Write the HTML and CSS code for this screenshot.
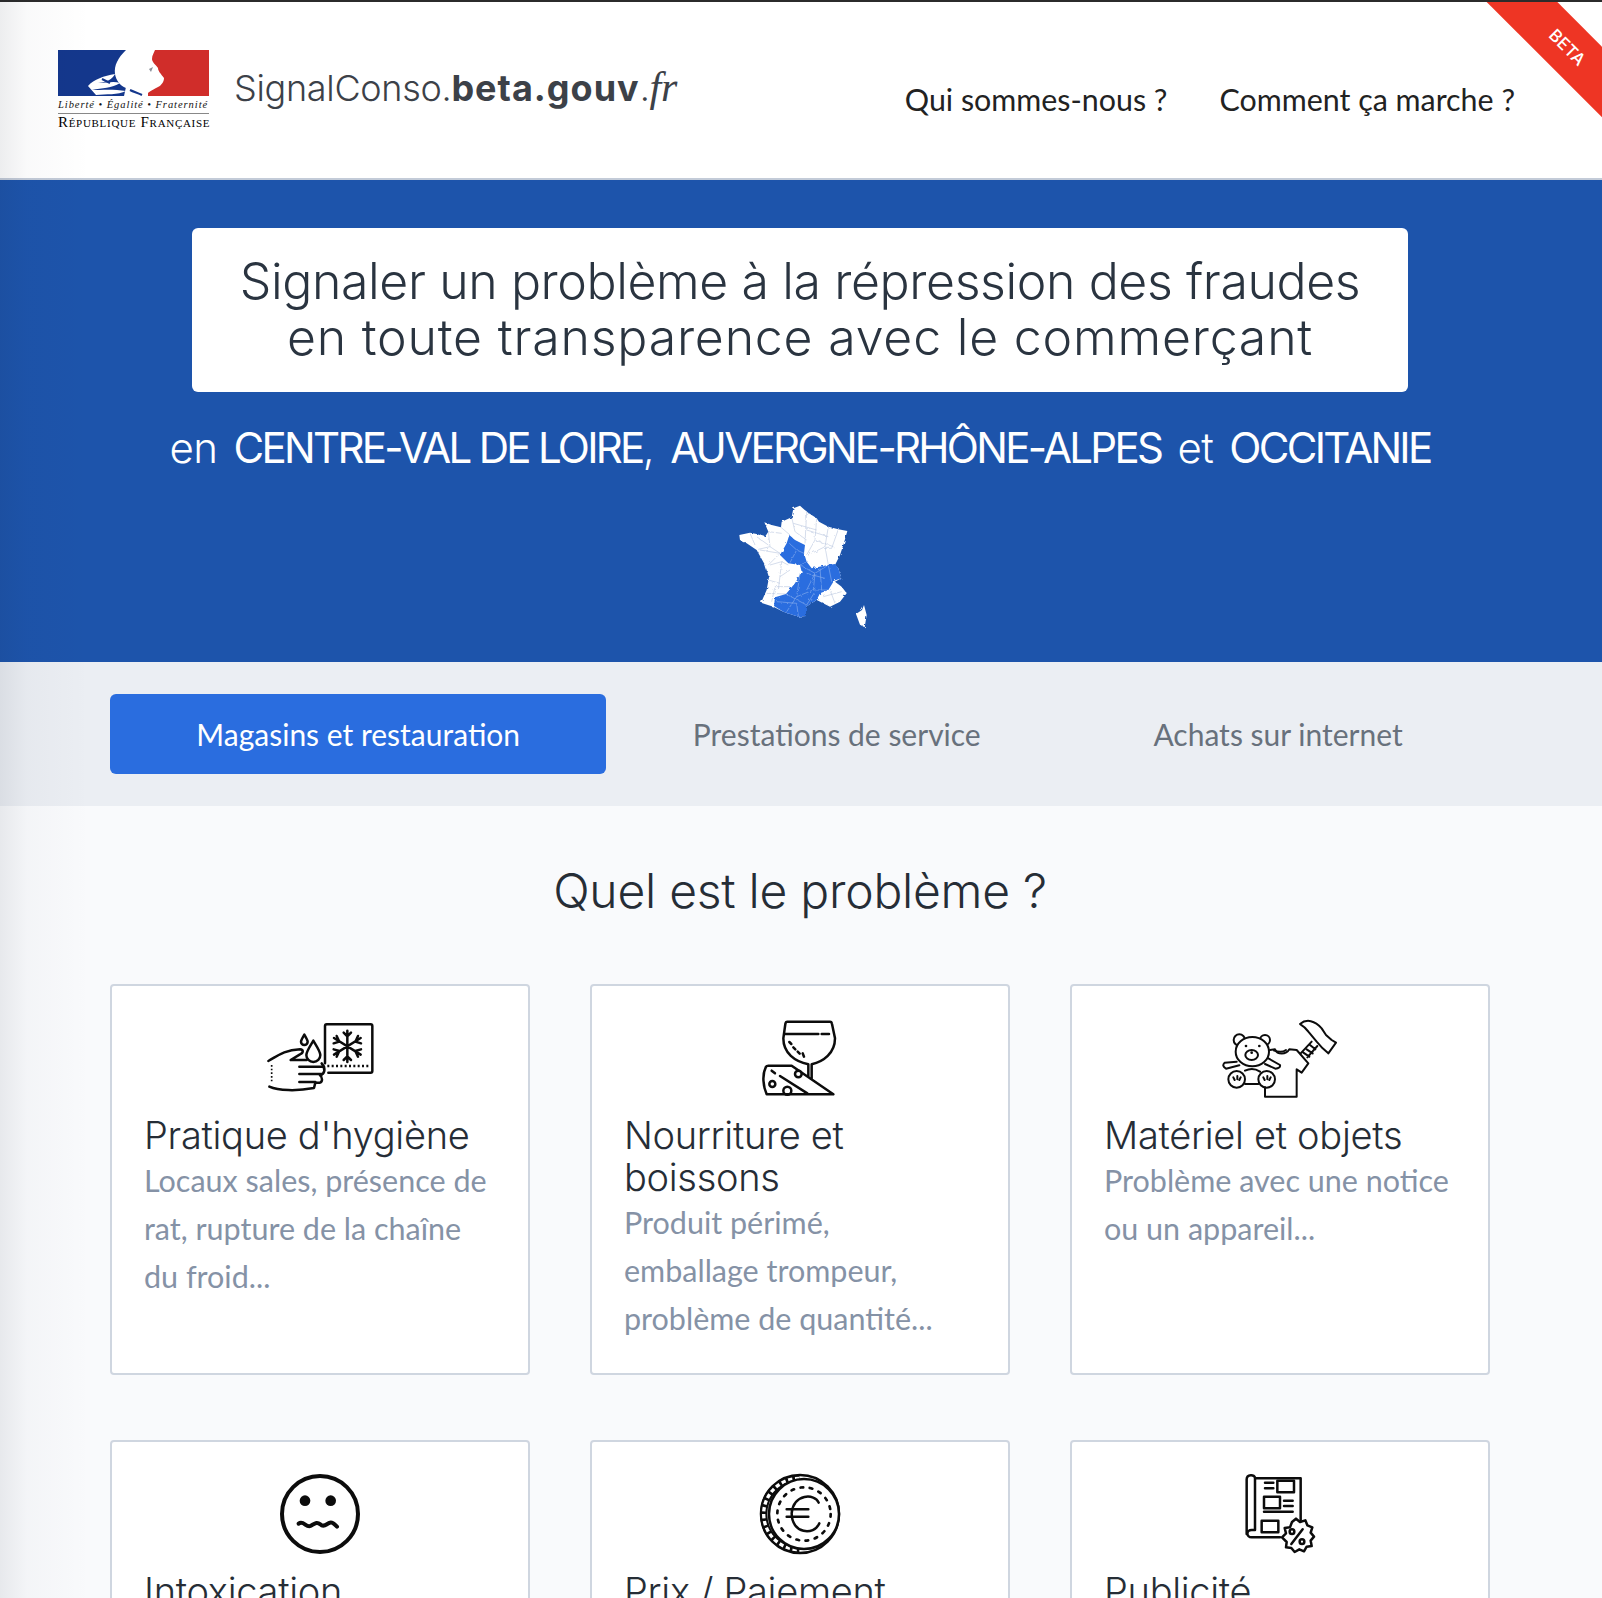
FILE: index.html
```html
<!DOCTYPE html>
<html lang="fr">
<head>
<meta charset="utf-8">
<title>SignalConso</title>
<link rel="stylesheet" href="styles.css">
</head>
<body>
<div class="page">
  <header class="site-header">
    <div class="brand">
      <div class="logo">
        <svg class="flag" viewBox="0 0 151 46" width="151" height="46">
          <rect width="151" height="46" fill="#fff"/>
          <path d="M0 0H68C60 8 56 15 57 24C58 30 62 36 68 38V46H0Z" fill="#14378c"/>
          <path d="M97 0H151V46H87C90 42 93 41 100 37C104 35 106 31 106 28C103 24 100 21 100 18C97 14 94 12 94 9C94 5 96 3 97 0Z" fill="#d02d2a"/>
          <path d="M66 46H90V42L80 37L68 37Z" fill="#fff"/>
          <path d="M30 36C36 29 46 26 57 24C54 30 48 32 40 33C48 33 56 31 62 33C54 38 44 38 34 40C44 40 56 39 68 41C60 45 48 44 38 45" fill="#fff"/>
          <path d="M44 29L52 33M72 40C76 42 80 43 84 45" stroke="#14378c" stroke-width="2" fill="none"/>
          <path d="M91 19L95 17L93 22Z" fill="#8a8f99"/>
        </svg>
        <div class="motto">Liberté • Égalité • Fraternité</div>
        <div class="republic">République Française</div>
      </div>
      <div class="site-name">SignalConso.<b>beta.gouv</b>.<i>fr</i></div>
    </div>
    <nav class="main-nav">
      <a>Qui sommes-nous ?</a>
      <a>Comment ça marche ?</a>
    </nav>
    <div class="ribbon"><span>BETA</span></div>
  </header>

  <section class="hero">
    <h1 class="hero-title">Signaler un problème à la répression des fraudes<br><span class="hero-line-2">en toute transparence avec le commerçant</span></h1>
    <p class="hero-sub">en <b>CENTRE-VAL DE LOIRE</b>, <b>AUVERGNE-RHÔNE-ALPES</b> et <b>OCCITANIE</b></p>
    <svg class="map" viewBox="0 0 600 450" width="200" height="150">
      <defs>
        <filter id="rough" x="-5%" y="-5%" width="110%" height="110%">
          <feTurbulence type="fractalNoise" baseFrequency="0.09" numOctaves="2" seed="4" result="n"/>
          <feDisplacementMap in="SourceGraphic" in2="n" scale="9"/>
        </filter>
      </defs>
      <g filter="url(#rough)">
        <path fill="#fff" d="M118 135L150 128L170 132L195 140L205 125L193 97L215 105L243 112L245 95L275 82L280 55L300 47L320 65L350 85L357 95L385 110L415 118L442 123L430 165L420 195L405 225L415 235L424 265L405 275L425 290L440 310L420 335L390 350L350 330L318 350L318 378L295 380L250 365L220 350L183 338L200 300L207 262L195 225L170 180L140 160L120 150Z"/>
        <path fill="#fff" d="M492 345L500 375L494 412L480 404L468 372L486 360Z"/>
        <g class="dept">
          <path d="M150 130L165 165M205 125L210 170L240 190M210 170L175 178M243 112L270 135M275 82L285 125L320 150M320 65L315 160M350 85L345 150L320 195M385 110L375 170L335 190M415 118L395 175L375 175M375 170L385 225M210 225L245 215L265 225M245 215L235 300M205 270L240 280M270 290L225 290M200 310L258 312M345 150L400 170M390 300L405 340M370 320L425 305M280 100L350 120M320 120L385 140M170 140L205 165M245 130L205 125M180 180L240 190M205 225L240 190M270 240L240 260M225 290L215 335"/>
        </g>
        <path fill="#2a6ddf" d="M268 135L285 150L315 165L312 190L320 215L300 225L265 220L240 195L260 160Z"/>
        <path fill="#2a6ddf" d="M320 215L335 235L385 225L405 222L415 235L424 265L402 272L385 300L360 310L350 330L318 350L318 378L295 380L250 365L222 348L225 322L258 312L285 280L305 245L300 225Z"/>
        <g class="dept-blue">
          <path d="M268 160L290 180L270 218M290 180L312 190M300 225L345 250L340 300M345 250L385 225M385 225L395 275M340 300L385 300M300 250L290 320L260 365M258 312L320 345M290 320L340 300M230 335L290 340L295 380M345 250L320 300M320 250L375 265M360 235L365 300M320 345L345 305"/>
        </g>
      </g>
    </svg>
  </section>

  <div class="tabs">
    <a class="tab tab-active">Magasins et restauration</a>
    <a class="tab">Prestations de service</a>
    <a class="tab">Achats sur internet</a>
  </div>

  <main class="content">
    <h2 class="section-title">Quel est le problème ?</h2>
    <div class="card-grid">
      <article class="card">
        <svg class="card-icon" viewBox="60 36 360 270" width="120" height="90">
          <path d="M255 190V78Q255 73 260 73H392Q397 73 397 78V213Q397 218 392 218H265"/>
          <path class="dots" d="M262 198H390"/>
          <path d="M322 92V186M282 114L362 164M362 114L282 164M311 98L322 109L333 98M311 180L322 169L333 180M281 130L298 125L290 108M363 130L346 125L354 108M281 148L298 153L290 170M363 148L346 153L354 170"/>
          <path d="M193 104C185 118 183 122 183 125A10 10 0 0 0 203 125C203 122 201 118 193 104Z"/>
          <path d="M220 122C206 145 199 155 199 165A21 21 0 0 0 241 165C241 155 234 145 220 122Z"/>
          <path d="M85 183C110 170 130 150 180 148C192 148 190 160 180 163L152 180H200M88 260C115 272 170 274 222 264L226 248H240C248 245 248 232 240 226C255 222 258 205 245 190"/>
          <path d="M178 200H252M178 222H246M178 246H226"/>
          <path class="dots-v" d="M95 195V250"/>
        </svg>
        <h3 class="card-title">Pratique d'hygiène</h3>
        <p class="card-text">Locaux sales, présence de rat, rupture de la chaîne du froid...</p>
      </article>
      <article class="card">
        <svg class="card-icon" viewBox="30 36 360 270" width="120" height="90">
          <path d="M172 65H300Q305 65 306 72L315 115C315 160 280 185 245 193V235M172 65Q167 65 166 72L160 115C160 160 195 185 235 193V228"/>
          <path d="M165 102H265M275 102H297M178 126L184 132M190 142L196 148M203 155L209 161M218 160L222 170"/>
          <path d="M108 200Q110 197 115 197H185L310 283H110C100 260 95 225 108 200Z"/>
          <circle cx="127" cy="252" r="9"/><circle cx="172" cy="272" r="12"/><circle cx="205" cy="222" r="10" fill="#fff"/>
          <path d="M125 212L135 220M150 228L232 280"/>
        </svg>
        <h3 class="card-title">Nourriture et boissons</h3>
        <p class="card-text">Produit périmé, emballage trompeur, problème de quantité...</p>
      </article>
      <article class="card">
        <svg class="card-icon fine" viewBox="60 36 360 270" width="120" height="90">
          <circle cx="118" cy="120" r="17"/><circle cx="195" cy="120" r="15"/>
          <ellipse cx="157" cy="155" rx="50" ry="44" fill="#fff"/>
          <ellipse cx="155" cy="165" rx="19" ry="15"/>
          <circle class="solid" cx="138" cy="138" r="4"/><circle class="solid" cx="178" cy="138" r="4"/><circle class="solid" cx="155" cy="158" r="4"/>
          <path d="M110 185L74 188Q64 198 78 206L118 196M205 175L240 195Q242 205 226 206L195 192"/>
          <circle cx="110" cy="238" r="25" fill="#fff"/><circle cx="200" cy="238" r="25" fill="#fff"/>
          <path d="M135 252H175M135 212C150 205 165 205 180 215M100 232L104 240M112 228V238M122 232L118 240M190 232L194 240M202 228V238M212 232L208 240"/>
          <path d="M210 150L225 148C232 165 258 165 268 148L290 150L325 190L305 218L290 208V290H195V262"/>
          <path d="M222 152C235 156 250 156 258 150"/>
          <path d="M302 160L335 125M322 172L352 138M310 158L328 170M320 148L338 160M330 135L346 148"/>
          <path d="M300 72C320 55 345 62 365 85L378 105L395 120L408 128L385 160L368 145L350 125L325 95C315 80 305 75 300 72Z"/>
        </svg>
        <h3 class="card-title">Matériel et objets</h3>
        <p class="card-text">Problème avec une notice ou un appareil...</p>
      </article>
      <article class="card">
        <svg class="card-icon thick" viewBox="0 24 360 270" width="120" height="90">
          <circle cx="180" cy="162" r="114"/>
          <circle class="solid" cx="135" cy="122" r="16"/><circle class="solid" cx="212" cy="122" r="16"/>
          <path d="M116 191C130 180 139 204 151 198C164 191 170 184 181 193C192 204 200 191 208 189C217 184 224 193 231 200"/>
        </svg>
        <h3 class="card-title">Intoxication</h3>
      </article>
      <article class="card">
        <svg class="card-icon" viewBox="0 24 360 270" width="120" height="90">
          <circle cx="180" cy="162" r="117"/>
          <path class="rim" d="M178 55A107 107 0 0 0 178 269"/>
          <path class="rim-gap" d="M178 55A107 107 0 0 0 178 269"/>
          <circle cx="192" cy="162" r="105" fill="#fff"/>
          <circle class="dots-round" cx="192" cy="162" r="80"/>
          <path d="M236 128C225 100 160 100 155 160C155 222 222 228 238 190M140 148H205M140 170H205"/>
        </svg>
        <h3 class="card-title">Prix / Paiement</h3>
      </article>
      <article class="card">
        <svg class="card-icon" viewBox="0 24 360 270" width="120" height="90">
          <path d="M105 55H242V180M180 232H95C78 232 78 210 95 210H105V55C105 42 80 42 80 58V222"/>
          <path class="dots-v" d="M105 62V205"/>
          <rect x="172" y="62" width="50" height="35"/><rect x="132" y="110" width="48" height="35"/><rect x="125" y="182" width="50" height="35"/>
          <path d="M135 68H160M135 85H160M192 122H218M192 138H218M132 155H218"/>
          <path fill="#fff" d="M228 176L240 186L256 181L262 196L277 202L272 218L282 230L272 242L275 258L260 260L252 274L238 268L224 276L214 264L198 262L200 246L186 232L198 220L194 204L210 202L216 186Z"/>
          <circle cx="216" cy="215" r="7"/><circle cx="246" cy="245" r="7"/>
          <path d="M248 208L214 252"/>
        </svg>
        <h3 class="card-title">Publicité</h3>
      </article>
    </div>
  </main>
  <div class="edge-shade"></div>
</div>
</body>
</html>
```
FILE: styles.css
```css
html, body { margin: 0; padding: 0; }
body { font-family: "Lato", "Open Sans", sans-serif; color: #222; background: #fff; }
.page { position: relative; height: 1598px; overflow: hidden; }
.edge-shade { position: absolute; top: 0; bottom: 0; left: 0; width: 90px; pointer-events: none; background: linear-gradient(to right, rgba(20,30,50,.08), rgba(20,30,50,.025) 30%, rgba(20,30,50,0)); }

.site-header { position: relative; height: 176px; border-top: 2px solid #2b2b2b; border-bottom: 2px solid #c3cbd8; display: flex; justify-content: space-between; background: #fff; }
.brand { display: flex; align-items: flex-start; padding: 48px 0 0 58px; }
.logo { width: 151px; }
.flag { display: block; }
.motto { font: italic 10.5px/13px "Liberation Serif", serif; white-space: nowrap; border-bottom: 1px solid #888; padding: 2px 0 2px; margin-bottom: 1px; letter-spacing: .95px; color: #111; }
.republic { font: 15px/15px "Liberation Serif", serif; font-variant: small-caps; white-space: nowrap; letter-spacing: .7px; color: #000; }
.site-name { margin: 14px 0 0 25px; font: 300 36px/46px "Inter", sans-serif; color: #3c4148; letter-spacing: -.3px; white-space: nowrap; }
.site-name b { font-weight: 700; letter-spacing: 1px; }
.site-name i { font-family: "Liberation Serif", serif; font-weight: 400; font-size: 42px; }
.main-nav { display: flex; gap: 52px; padding: 76px 87px 0 0; font-size: 30.4px; line-height: 42px; color: #222; }
.main-nav a { white-space: nowrap; }

.ribbon { position: absolute; top: 0; right: 0; width: 116px; height: 116px; overflow: hidden; }
.ribbon span { position: absolute; left: -24px; top: 15px; width: 200px; height: 50px; box-sizing: border-box; padding-left: 15px; background: #ee3524; color: #fff; transform: rotate(45deg); font: 500 17px/50px "Inter", sans-serif; text-align: center; }

.hero { background: #1d54ab; height: 482px; display: flex; flex-direction: column; align-items: center; padding: 48px 2px 0 0; box-sizing: border-box; }
.hero-title { margin: 0; width: 1216px; height: 164px; box-sizing: border-box; padding: 25px 0 0; background: #fff; border-radius: 6px; font: 300 50px/56px "Inter", sans-serif; color: #2a3440; text-align: center; letter-spacing: -.4px; }
.hero-line-2 { letter-spacing: .8px; }
.hero-sub { margin: 31px 0 0; font: 300 42px/50px "Inter", sans-serif; color: #fff; white-space: nowrap; letter-spacing: -.6px; word-spacing: 5px; }
.hero-sub b { font-weight: 400; letter-spacing: -2.7px; word-spacing: 0; }
.map { display: block; margin-top: 17px; }
.map path { stroke: none; }
.dept path { fill: none; stroke: #b9c6df; stroke-width: 1.8; }
.dept-blue path { fill: none; stroke: #8fb2ee; stroke-width: 1.8; }

.tabs { height: 144px; background: #ebeef3; box-sizing: border-box; padding: 32px 113px 32px 110px; display: flex; }
.tab { flex: 1 1 auto; display: flex; align-items: center; justify-content: center; border-radius: 6px; font-size: 30px; color: #68717c; white-space: nowrap; }
.tab-active { background: #2a6ddf; color: #fff; }

.content { background: #f9fafc; padding: 0 112px 0 110px; height: 792px; box-sizing: border-box; }
.section-title { margin: 0; padding-top: 53px; height: 178px; box-sizing: border-box; font: 300 48px/64px "Inter", sans-serif; color: #262d36; text-align: center; letter-spacing: -.25px; }
.card-grid { display: grid; grid-template-columns: repeat(3, 420px); column-gap: 60px; row-gap: 65px; }
.card { background: #fff; border: 2px solid #cfd6e0; border-radius: 4px; padding: 26px 32px 30px; min-height: 391px; box-sizing: border-box; }
.card-icon { display: block; margin: 0 auto 12px; fill: none; stroke: #0c0c0c; stroke-width: 7.5; stroke-linecap: round; stroke-linejoin: round; }
.card-icon .solid { fill: #0c0c0c; stroke: none; }
.card-icon .dots { stroke-linecap: butt; stroke-dasharray: 6 7; stroke-width: 7; }
.card-icon .dots-v { stroke-linecap: butt; stroke-dasharray: 5 6; stroke-width: 5; }
.card-icon .dots-round { stroke-linecap: round; stroke-dasharray: 8 20; stroke-width: 8; }
.card-icon .rim { stroke-width: 22; stroke-linecap: butt; }
.card-icon .rim-gap { stroke: #fff; stroke-width: 10; stroke-linecap: butt; stroke-dasharray: 13 8; }
.card-icon.fine { stroke-width: 6; }
.card-icon.thick { stroke-width: 12; }
.card-title { margin: 0; font: 300 38px/42px "Inter", sans-serif; color: #262d36; letter-spacing: -.3px; }
.card-text { margin: 0; padding-right: 7px; font-size: 30.5px; line-height: 48px; color: #8592a6; }
```
